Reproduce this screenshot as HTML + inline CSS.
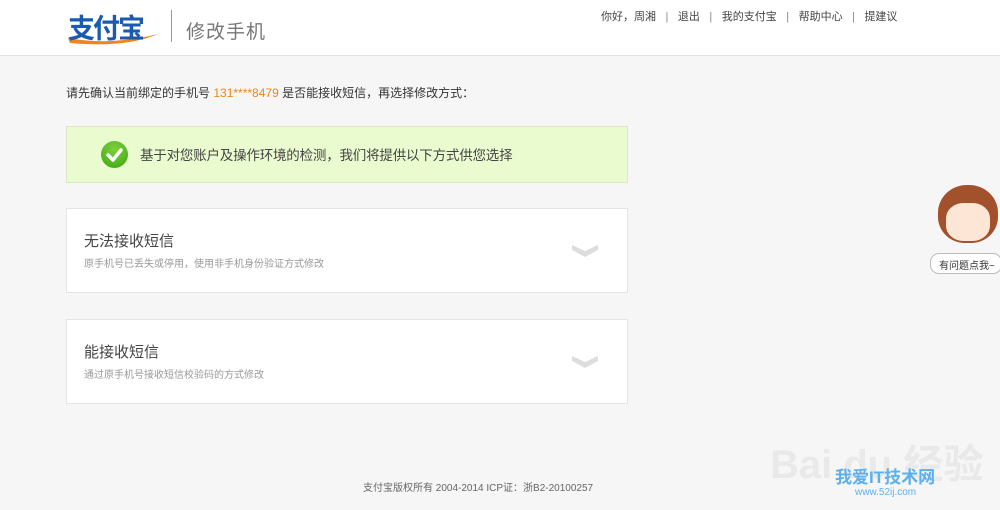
<!DOCTYPE html>
<html><head><meta charset="utf-8"><style>
*{margin:0;padding:0;box-sizing:border-box}
body{width:1000px;height:510px;overflow:hidden;background:#f6f6f6;font-family:"Liberation Sans","Noto Sans CJK SC",sans-serif;position:relative;color:#333}
.hd{position:absolute;left:0;top:0;width:1000px;height:56px;background:#fff;border-bottom:1px solid #e3e3e3}
.logo{position:absolute;left:68px;top:7px;font-size:27px;font-weight:bold;color:#1a5bb0;letter-spacing:-2px;font-family:"Noto Sans CJK SC",sans-serif}
.swoosh{position:absolute;left:66px;top:26px}
.sep{position:absolute;left:171px;top:10px;width:1px;height:32px;background:#999}
.title{position:absolute;left:186px;top:17px;font-size:19px;color:#777;letter-spacing:1px}
.nav{position:absolute;left:601px;top:8px;font-size:11px;color:#444;white-space:nowrap}
.nav i{font-style:normal;color:#888;margin:0 9.5px}
.tip{position:absolute;left:66px;top:84px;font-size:12px;color:#333}
.tip b{font-weight:normal;color:#f08519}
.ok{position:absolute;left:66px;top:126px;width:562px;height:57px;background:#ebfbd0;border:1px solid #dbe8c4}
.ok .ic{position:absolute;left:34px;top:14px;width:27px;height:27px;border-radius:50%;background:radial-gradient(circle at 50% 30%,#7fd03a,#3aa514)}
.ok span{position:absolute;left:73px;top:17px;font-size:13.5px;color:#444;letter-spacing:-0.2px}
.card{position:absolute;left:66px;width:562px;height:85px;background:#fff;border:1px solid #e5e5e5}
.card h3{position:absolute;left:17px;top:21px;font-size:15px;font-weight:normal;color:#444}
.card p{position:absolute;left:17px;top:46px;font-size:10px;color:#999}
.card svg{position:absolute;left:505px;top:35px}
.ft{position:absolute;left:363px;top:479px;font-size:10px;color:#666}
</style></head><body>
<div class="hd">
<svg class="swoosh" width="95" height="20"><path d="M2 12 Q45 20 92 8 Q60 22 4 17Z" fill="#f08519"/></svg>
<div class="logo">支付宝</div>
<div class="sep"></div>
<div class="title">修改手机</div>
<div class="nav">你好，周湘<i>|</i>退出<i>|</i>我的支付宝<i>|</i>帮助中心<i>|</i>提建议</div>
</div>
<div class="tip">请先确认当前绑定的手机号 <b>131****8479</b> 是否能接收短信，再选择修改方式：</div>
<div class="ok"><div class="ic"><svg width="27" height="27"><path d="M7 14 L12 19 L20 9" stroke="#fff" stroke-width="3.5" fill="none" stroke-linecap="round" stroke-linejoin="round"/></svg></div><span>基于对您账户及操作环境的检测，我们将提供以下方式供您选择</span></div>
<div class="card" style="top:208px"><h3>无法接收短信</h3><p>原手机号已丢失或停用，使用非手机身份验证方式修改</p><svg width="26" height="14"><path d="M0 1 L13 7 L26 1 L26 6 L13 13 L0 6Z" fill="#ddd"/></svg></div>
<div class="card" style="top:319px"><h3>能接收短信</h3><p>通过原手机号接收短信校验码的方式修改</p><svg width="26" height="14"><path d="M0 1 L13 7 L26 1 L26 6 L13 13 L0 6Z" fill="#ddd"/></svg></div>
<div style="position:absolute;left:938px;top:185px;width:60px;height:58px;border-radius:48% 48% 45% 45%;background:#a3502c"></div>
<div style="position:absolute;left:946px;top:203px;width:44px;height:38px;border-radius:40%;background:#fde6d6"></div>
<div style="position:absolute;left:930px;top:253px;width:72px;height:21px;border:1px solid #bbb;border-radius:9px;background:#fff;font-size:10px;color:#333;padding:3px 0 0 8px">有问题点我~</div>
<div style="position:absolute;left:770px;top:432px;font-size:40px;color:#e9e9e9;font-weight:bold">Bai du 经验</div>
<div style="position:absolute;left:835px;top:463px;font-size:17px;color:#5cb0ef;font-weight:bold">我爱IT技术网</div>
<div style="position:absolute;left:855px;top:487px;font-size:10px;color:#5cb0ef">www.52ij.com</div>
<div class="ft">支付宝版权所有 2004-2014 ICP证：浙B2-20100257</div>
</body></html>
